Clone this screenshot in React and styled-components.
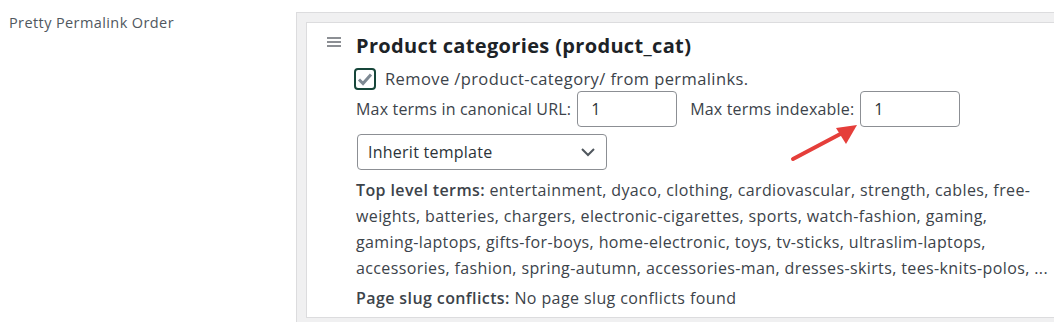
import React from 'react';
import styled, { createGlobalStyle } from 'styled-components';

const GlobalStyle = createGlobalStyle`
  html, body {
    margin: 0;
    padding: 0;
    background: #fff;
    overflow: hidden;
  }
  body {
    font-family: "Open Sans", "Noto Sans", sans-serif;
    color: #3c434a;
  }
`;

const Page = styled.div`
  position: relative;
  display: flex;
  width: 1054px;
  height: 322px;
`;

const SettingLabel = styled.div`
  width: 287px;
  flex: none;
  padding: 13px 0 0 9px;
  font-size: 14.5px;
  letter-spacing: 0.4px;
  line-height: 20px;
  color: #50575e;
`;

const Panel = styled.div`
  flex: none;
  width: 800px;
  margin-top: 12px;
  padding: 9px 0 0 9px;
  background: #f0f0f1;
  border-top: 1px solid #dcdcde;
  border-left: 1px solid #dcdcde;
`;

const Card = styled.div`
  display: flex;
  background: #fff;
  border: 1px solid #dcdcde;
  padding: 8px 0 6px 20px;
`;

const Handle = styled.div`
  width: 29px;
  flex: none;
  padding-top: 6px;
  svg { display: block; }
`;

const Body = styled.div`
  flex: 1;
  font-size: 16px;
  letter-spacing: 0.4px;
  line-height: 24px;
`;

const Title = styled.h2`
  margin: 0 0 6px;
  font-size: 20px;
  letter-spacing: 0.34px;
  line-height: 30px;
  font-weight: 700;
  color: #1d2327;
`;

const CheckRow = styled.label`
  display: flex;
  align-items: center;
  gap: 9px;
  height: 24px;
  margin-left: -2px;
  font-size: 16.5px;
`;

const Box = styled.span`
  width: 18px;
  height: 18px;
  border: 2px solid #17463a;
  border-radius: 4px;
  display: flex;
  align-items: center;
  justify-content: center;
`;

const FieldRow = styled.div`
  display: flex;
  align-items: center;
  height: 36px;
  letter-spacing: 0.18px;
`;

const FieldLabel = styled.span`
  margin-right: 6px;
  white-space: nowrap;
`;

const NumberInput = styled.div`
  width: 100px;
  height: 36px;
  box-sizing: border-box;
  border: 1px solid #8c8f94;
  border-radius: 4px;
  padding: 0 13px;
  display: flex;
  align-items: center;
  color: #2c3338;
  margin-right: ${p => p.gap || 0}px;
`;

const Select = styled.div`
  margin: 7px 0 7px 1px;
  width: 250px;
  height: 36px;
  box-sizing: border-box;
  border: 1px solid #8c8f94;
  border-radius: 4px;
  padding: 0 10px 0 10px;
  display: flex;
  align-items: center;
  justify-content: space-between;
  color: #2c3338;
  letter-spacing: 0.25px;
`;

const Para = styled.p`
  margin: 0;
  width: 698px;
  line-height: 26px;
  letter-spacing: 0.38px;
  b { font-weight: 600; }
`;

const Slug = styled.p`
  margin: 4px 0 0;
  line-height: 26px;
  b { font-weight: 600; }
`;

const Arrow = styled.svg`
  position: absolute;
  left: 788px;
  top: 122px;
`;

export default function App() {
  return (
    <>
      <GlobalStyle />
      <Page>
        <SettingLabel>Pretty Permalink Order</SettingLabel>
        <Panel>
          <Card>
            <Handle>
              <svg width="15" height="11" viewBox="0 0 15 11">
                <rect x="0" y="0" width="14" height="2" fill="#8c8f94" />
                <rect x="0" y="4" width="14" height="2" fill="#8c8f94" />
                <rect x="0" y="8" width="14" height="2" fill="#8c8f94" />
              </svg>
            </Handle>
            <Body>
              <Title>Product categories (product_cat)</Title>
              <CheckRow>
                <Box>
                  <svg width="16" height="14" viewBox="0 0 16 14">
                    <path d="M2 7.5 L6 11.5 L14 2.5" fill="none" stroke="#7e8993" strokeWidth="3" />
                  </svg>
                </Box>
                Remove /product-category/ from permalinks.
              </CheckRow>
              <FieldRow>
                <FieldLabel>Max terms in canonical URL:</FieldLabel>
                <NumberInput gap={13}>1</NumberInput>
                <FieldLabel>Max terms indexable:</FieldLabel>
                <NumberInput>1</NumberInput>
              </FieldRow>
              <Select>
                <span>Inherit template</span>
                <svg width="16" height="10" viewBox="0 0 16 10">
                  <path d="M2 2 L8 8 L14 2" fill="none" stroke="#50575e" strokeWidth="2" />
                </svg>
              </Select>
              <Para>
                <b>Top level terms:</b> entertainment, dyaco, clothing, cardiovascular, strength, cables, free-weights, batteries, chargers, electronic-cigarettes, sports, watch-fashion, gaming, gaming-laptops, gifts-for-boys, home-electronic, toys, tv-sticks, ultraslim-laptops, accessories, fashion, spring-autumn, accessories-man, dresses-skirts, tees-knits-polos, ...
              </Para>
              <Slug>
                <b>Page slug conflicts:</b> No page slug conflicts found
              </Slug>
            </Body>
          </Card>
        </Panel>
        <Arrow width="72" height="42" viewBox="0 0 72 42">
          <path d="M5 37 L58 9" stroke="#e53e3a" strokeWidth="4" strokeLinecap="round" />
          <path d="M69 3 L48 6 L58 22 Z" fill="#e53e3a" />
        </Arrow>
      </Page>
    </>
  );
}
